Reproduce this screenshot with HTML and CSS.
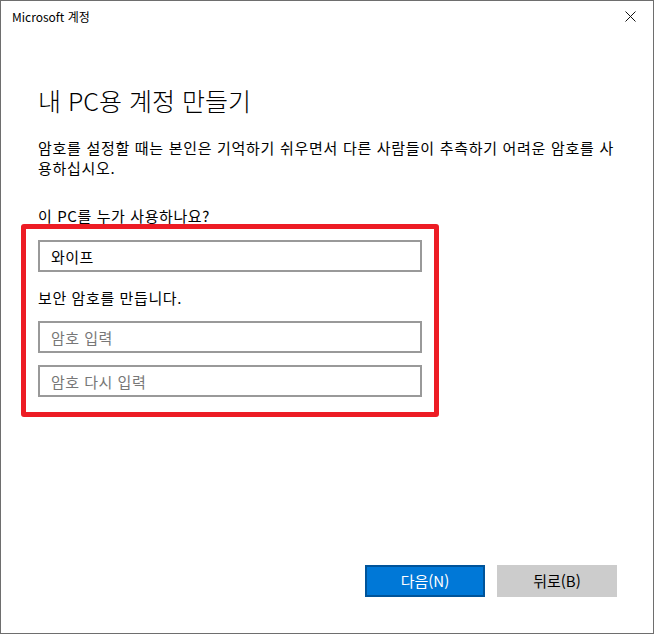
FILE: index.html
```html
<!DOCTYPE html>
<html lang="ko">
<head>
<meta charset="utf-8">
<title>Microsoft 계정</title>
<link rel="stylesheet" href="styles.css">
</head>
<body>
<div class="window">
  <div class="titlebar">
    <span class="title">Microsoft 계정</span>
    <span class="close" aria-label="닫기">
      <svg width="11" height="11" viewBox="0 0 11 11"><path d="M0.5 0.5 L10.5 10.5 M10.5 0.5 L0.5 10.5" stroke="#111" stroke-width="1" fill="none"/></svg>
    </span>
  </div>
  <div class="content">
    <h1 class="heading">내 PC용 계정 만들기</h1>
    <p class="para">암호를 설정할 때는 본인은 기억하기 쉬우면서 다른 사람들이 추측하기 어려운 암호를 사용하십시오.</p>
    <div class="label label-who">이 PC를 누가 사용하나요?</div>
    <input class="field field-name" type="text" value="와이프">
    <div class="label label-pw">보안 암호를 만듭니다.</div>
    <input class="field field-pw1" type="password" placeholder="암호 입력">
    <input class="field field-pw2" type="password" placeholder="암호 다시 입력">
    <div class="footer">
      <button class="btn btn-next">다음(N)</button>
      <button class="btn btn-back">뒤로(B)</button>
    </div>
  </div>
  <div class="highlight"></div>
</div>
</body>
</html>
```
FILE: styles.css
```css
html, body {
  margin: 0;
  padding: 0;
  background: #ffffff;
}

body {
  font-family: "Noto Sans CJK KR", "Noto Sans", sans-serif;
  color: #000;
}

.window {
  position: relative;
  width: 654px;
  height: 634px;
  box-sizing: border-box;
  border: 1px solid #6e6e6e;
  background: #ffffff;
  display: flex;
  flex-direction: column;
}

.titlebar {
  height: 32px;
  display: flex;
  align-items: center;
  justify-content: space-between;
  padding: 0 17px 0 11px;
  flex: none;
}

.title {
  font-size: 12px;
  line-height: 16px;
  color: #000;
}

.close {
  display: flex;
  width: 11px;
  height: 11px;
  margin-top: -1px;
}

.content {
  flex: 1;
  display: flex;
  flex-direction: column;
  padding-left: 37px;
}

.heading {
  margin: 51px 0 0 0;
  font-size: 25px;
  font-weight: 300;
  line-height: 32px;
  color: #000;
}

.para {
  margin: 22px 0 0 0;
  width: 584px;
  font-size: 15px;
  line-height: 20px;
  letter-spacing: 0.7px;
}

.label {
  font-size: 15px;
  line-height: 20px;
  letter-spacing: 0.6px;
}

.label-who {
  margin-top: 28px;
}

.label-pw {
  margin-top: 16px;
}

.field {
  display: block;
  width: 384px;
  height: 32px;
  box-sizing: border-box;
  border: 2px solid #999999;
  border-radius: 0;
  padding: 0 11px;
  margin: 0;
  font-family: "Noto Sans CJK KR", "Noto Sans", sans-serif;
  font-size: 15px;
  letter-spacing: 0.5px;
  color: #000;
  background: #fff;
  outline: none;
}

.field::placeholder {
  color: #777777;
  opacity: 1;
}

.field-name {
  margin-top: 14px;
}

.field-pw1 {
  margin-top: 13px;
}

.field-pw2 {
  margin-top: 12px;
}

.footer {
  margin-top: auto;
  display: flex;
  justify-content: flex-end;
  gap: 12px;
  padding: 0 36px 36px 0;
}

.btn {
  width: 120px;
  height: 32px;
  box-sizing: border-box;
  margin: 0;
  padding: 0;
  font-family: "Noto Sans CJK KR", "Noto Sans", sans-serif;
  font-size: 15px;
  line-height: 20px;
  border-radius: 0;
}

.btn-next {
  background: #0078d7;
  border: 2px solid #00549a;
  color: #ffffff;
}

.btn-back {
  background: #cccccc;
  border: 2px solid #cccccc;
  color: #000000;
}

.highlight {
  position: absolute;
  left: 20px;
  top: 223px;
  width: 418px;
  height: 193px;
  box-sizing: border-box;
  border: 5px solid #ed1c24;
  border-radius: 3px;
  pointer-events: none;
}
```
